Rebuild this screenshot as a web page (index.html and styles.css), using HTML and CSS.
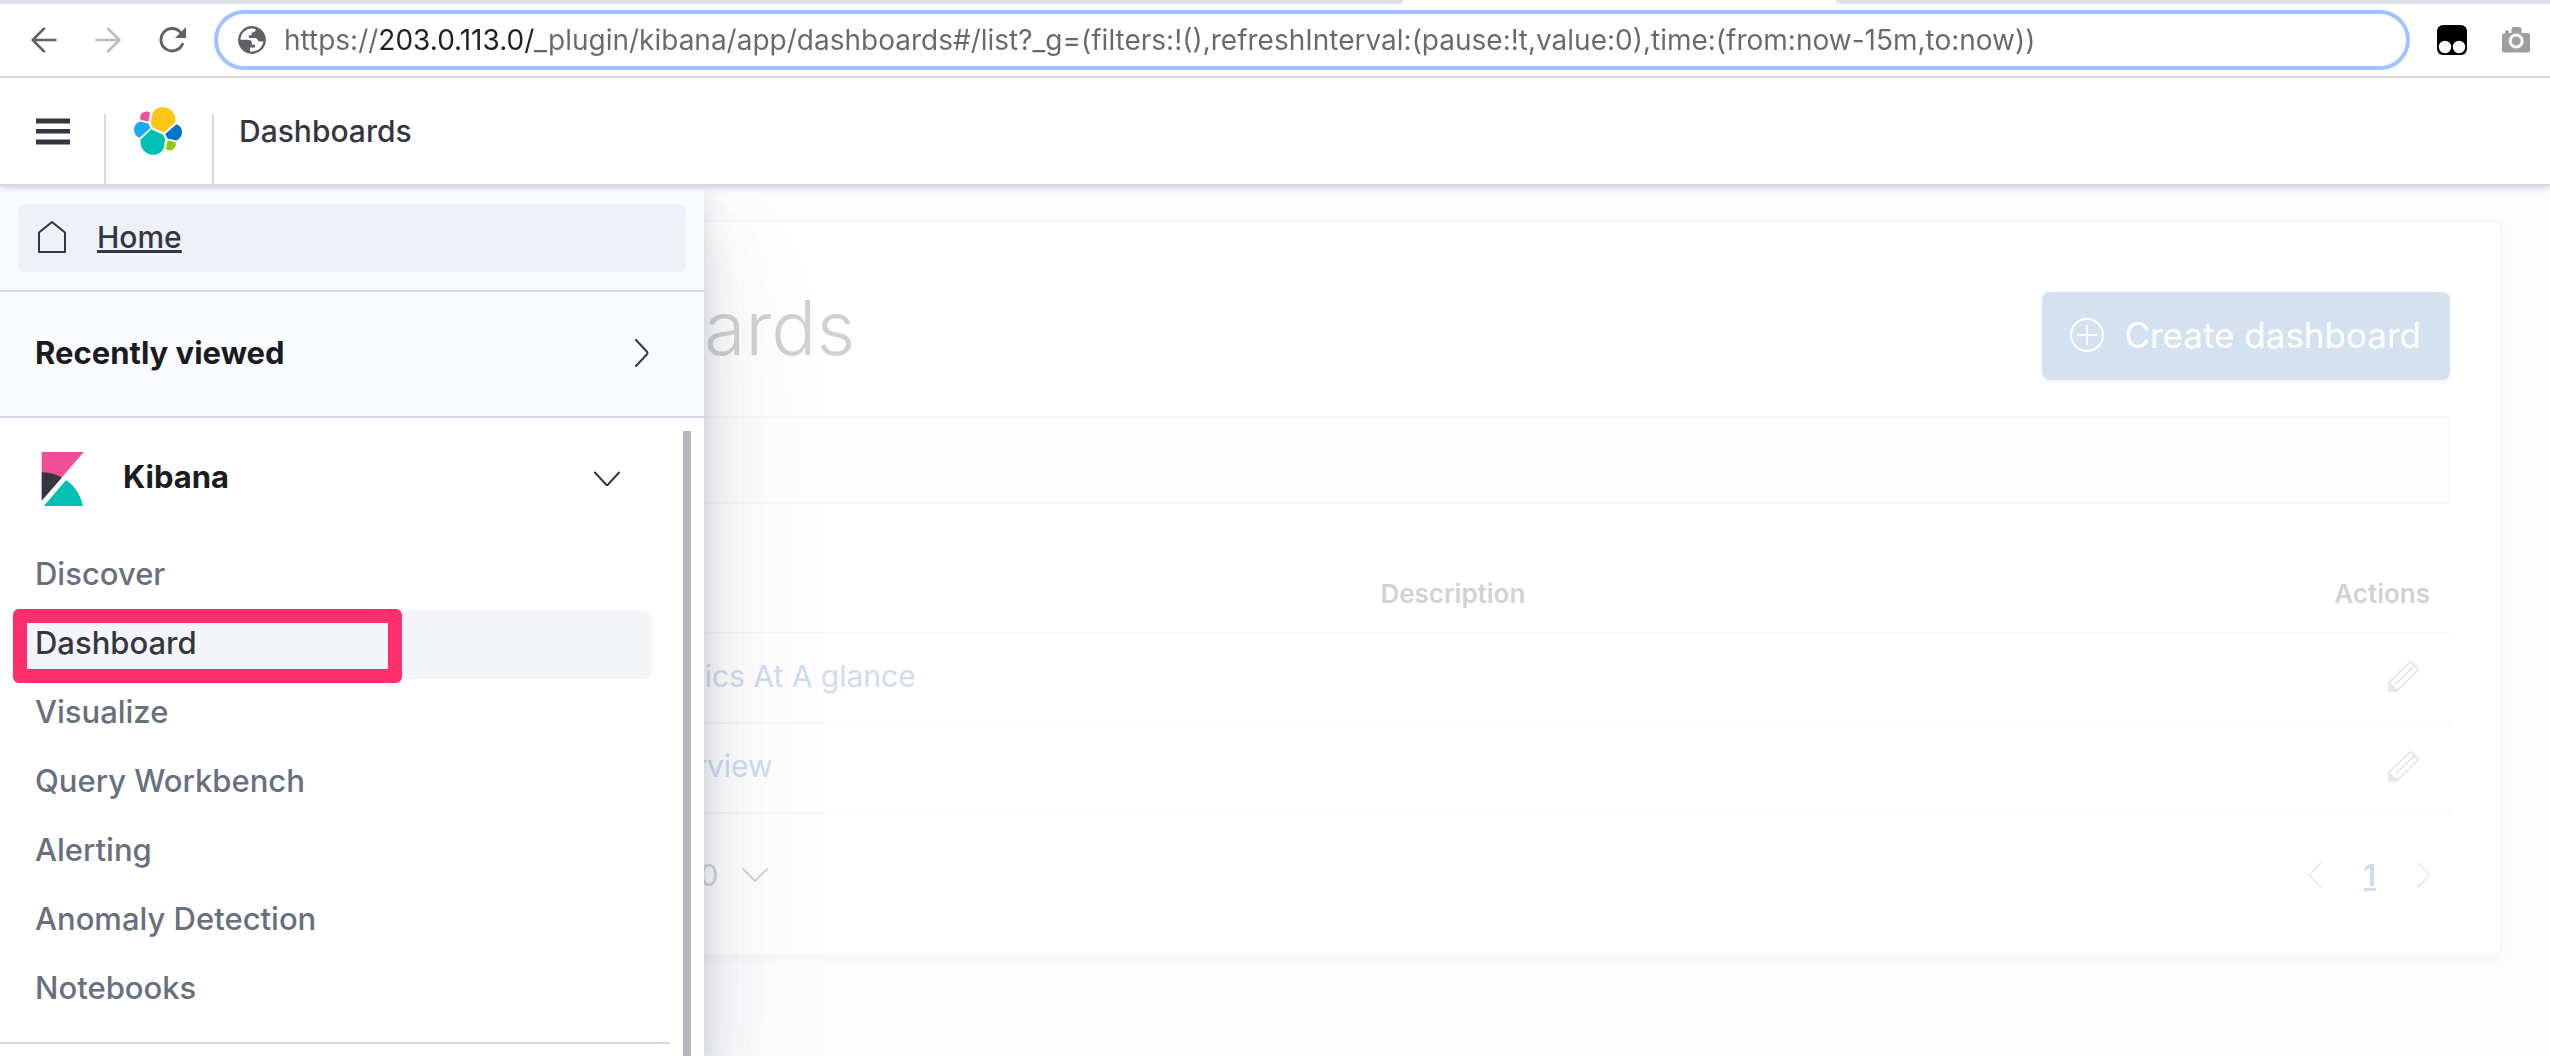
FILE: index.html
```html
<!DOCTYPE html>
<html lang="en">
<head>
<meta charset="utf-8">
<title>Dashboards</title>
<link rel="stylesheet" href="styles.css">
</head>
<body>
<div class="tabstrip"><span class="tabstrip-left"></span><span class="tabstrip-right"></span></div>
<div class="toolbar">
  <button class="icon-btn" aria-label="Back"><svg width="26" height="26" viewBox="0 0 26 26" fill="none" stroke="#5f6368" stroke-width="2.6" stroke-linecap="round" stroke-linejoin="round"><path d="M24.5 13H2M13 1.7L1.7 13L13 24.3"/></svg></button>
  <button class="icon-btn" aria-label="Forward"><svg width="26" height="26" viewBox="0 0 26 26" fill="none" stroke="#babcbe" stroke-width="2.6" stroke-linecap="round" stroke-linejoin="round"><path d="M1.5 13H24M13 1.7L24.3 13L13 24.3"/></svg></button>
  <button class="icon-btn" aria-label="Reload"><svg width="27" height="26" viewBox="0 0 27 26"><path d="M23.4 17.2A11.2 11.2 0 1 1 21.8 5.6" fill="none" stroke="#5f6368" stroke-width="2.9" stroke-linecap="round"/><path d="M27 0V11H16z" fill="#5f6368"/></svg></button>
  <label class="address">
    <svg width="28" height="28" viewBox="0 0 28 28"><circle cx="14" cy="14" r="12.7" fill="none" stroke="#5f6368" stroke-width="2.4"/><path d="M1 13.8H9.5C12.5 13.8 14 15 14 17.5V18.8H17V21.5H12V27L7 26L2 20z" fill="#5f6368"/><path d="M18 1.5L17.5 4.5C17 6 15.500 6.5 13.500 6.500V9.200H10.800V12H17.500C19.500 12 19.500 15 21.500 15.500H27L26.500 9L22 3z" fill="#5f6368"/></svg>
    <input class="address-input" type="text" aria-label="Address" value="https://203.0.113.0/_plugin/kibana/app/dashboards#/list?_g=(filters:!(),refreshInterval:(pause:!t,value:0),time:(from:now-15m,to:now))">
  </label>
  <button class="icon-btn ext-monkey" aria-label="Script manager"><svg width="30" height="30" viewBox="0 0 30 30"><rect width="30" height="30" rx="6" fill="#000"/><circle cx="8" cy="22" r="6.200" fill="#fff"/><circle cx="22" cy="22" r="6.200" fill="#fff"/></svg></button>
  <button class="icon-btn" aria-label="Screenshot"><svg width="28" height="26" viewBox="0 0 28 26"><path d="M2 6.500H3V4.500Q5 2 7 4.500V6H9.500V2Q9.500 0 11.500 0H17.500Q19.500 0 19.500 2V6H26Q28 6 28 8V23.500Q28 25.500 26 25.500H2Q0 25.500 0 23.500V8.500Q0 6.500 2 6.500z" fill="#9e9e9e"/><circle cx="14.200" cy="14" r="6" fill="none" stroke="#fff" stroke-width="3"/></svg></button>
</div>
<header class="app-header">
  <button class="icon-btn" aria-label="Toggle navigation"><svg width="34" height="27" viewBox="0 0 34 27" fill="#343741"><path d="M0 .5h34v5H0zM0 11h34v4.500H0zM0 21.500h34v5H0z"/></svg></button>
  <span class="divider"></span>
  <a class="logo" href="#" aria-label="Elastic home"><svg width="52" height="52" viewBox="0 0 32 32"><path fill="#FEC514" d="M12.580 13.787l7.002 3.211 7.066-6.213a7.849 7.849 0 00.152-1.557c0-4.287-3.464-7.775-7.720-7.775a7.700 7.700 0 00-6.360 3.363l-1.176 6.122 1.036 2.850z"/><path fill="#00BFB3" d="M5.333 21.215a7.930 7.930 0 00-.152 1.577c0 4.300 3.474 7.797 7.742 7.797a7.710 7.710 0 006.383-3.390l1.166-6.104-1.556-2.988-7.030-3.215-6.553 6.323z"/><path fill="#F04E98" d="M5.288 9.067l4.800 1.137L11.140 4.730a3.785 3.785 0 00-2.314-.790 3.833 3.833 0 00-3.813 3.840c0 .444.090.883.275 1.287z"/><path fill="#1BA9F5" d="M4.872 10.214c-2.140.710-3.609 2.770-3.609 5.035a5.314 5.314 0 003.373 4.950l6.733-6.115-1.236-2.652-5.261-1.218z"/><path fill="#93C90E" d="M20.873 27.200a3.745 3.745 0 002.297.790 3.830 3.830 0 003.813-3.830c0-.444-.090-.870-.275-1.274l-4.790-1.127-1.045 5.441z"/><path fill="#07C" d="M21.848 20.563l5.280 1.238c2.142-.710 3.609-2.770 3.609-5.040a5.306 5.306 0 00-3.390-4.936l-6.896 6.070 1.397 2.668z"/></svg></a>
  <span class="divider"></span>
  <span class="crumb">Dashboards</span>
</header>
<div class="workspace">
  <main class="page">
    <section class="panel">
      <div class="panel-head">
        <h1 class="title">Dashboards</h1>
        <button class="create"><svg width="34" height="34" viewBox="0 0 34 34" fill="none" stroke="#fff" stroke-width="2"><circle cx="17" cy="17" r="16"/><path d="M17 7V27M7 17H27"/></svg>Create dashboard</button>
      </div>
      <input class="search" type="search" aria-label="Search dashboards">
      <table class="list">
        <thead><tr><th class="col-name">Title</th><th class="col-desc">Description</th><th class="col-act">Actions</th></tr></thead>
        <tbody>
          <tr><td><a href="#">Application Metrics At A glance</a></td><td></td><td class="act"><button class="icon-btn" aria-label="Edit"><svg width="32" height="32" viewBox="0 0 32 32" fill="none" stroke="#e6e7e8" stroke-width="2" stroke-linejoin="round"><path d="M1 30.500V22.500L22.500 1.500L30.500 9.500L9 30.500zM26.500 5.500L7.500 24M18.500 5.500"/><path d="M1 23L9 30.500H1z" fill="#e6e7e8"/></svg></button></td></tr>
          <tr><td><a href="#">Application Overview</a></td><td></td><td class="act"><button class="icon-btn" aria-label="Edit"><svg width="32" height="32" viewBox="0 0 32 32" fill="none" stroke="#e6e7e8" stroke-width="2" stroke-linejoin="round"><path d="M1 30.500V22.500L22.500 1.500L30.500 9.500L9 30.500zM26.500 5.500L7.500 24M18.500 5.500"/><path d="M1 23L9 30.500H1z" fill="#e6e7e8"/></svg></button></td></tr>
        </tbody>
      </table>
      <div class="pager">
        <button class="rows">Rows per page: 10<svg width="26" height="14" viewBox="0 0 26 14" fill="none" stroke="#d4d5d7" stroke-width="2" stroke-linecap="round" stroke-linejoin="round"><path d="M1 1L13 13L25 1"/></svg></button>
        <nav class="pages" aria-label="Pages">
          <button class="icon-btn" aria-label="Previous page"><svg width="14" height="26" viewBox="0 0 14 26" fill="none" stroke="#ebecee" stroke-width="2" stroke-linecap="round" stroke-linejoin="round"><path d="M13 1L1 13L13 25"/></svg></button>
          <a class="page-no" href="#">1</a>
          <button class="icon-btn" aria-label="Next page"><svg width="14" height="26" viewBox="0 0 14 26" fill="none" stroke="#ebecee" stroke-width="2" stroke-linecap="round" stroke-linejoin="round"><path d="M1 1L13 13L1 25"/></svg></button>
        </nav>
      </div>
    </section>
  </main>
  <nav class="sidenav" aria-label="Main">
    <div class="home-wrap">
      <a class="home" href="#"><svg width="28" height="32" viewBox="0 0 28 32" fill="none" stroke="#343741" stroke-width="2" stroke-linejoin="round"><path d="M1 11.500L14 1L27 11.500V31H1z"/></svg><span>Home</span></a>
    </div>
    <button class="recent">Recently viewed<svg width="14" height="28" viewBox="0 0 14 28" fill="none" stroke="#343741" stroke-width="2" stroke-linecap="round" stroke-linejoin="round"><path d="M1 1L11.800 12.500Q13 14 11.800 15.500L1 27"/></svg></button>
    <div class="scroller">
      <section class="group">
        <button class="group-head"><svg width="54" height="54" viewBox="0 0 32 32"><path fill="#F04E98" d="M4 0v28.789L28.935.017z"/><path fill="#343741" d="M4 12v16.789l11.906-13.738A24.721 24.721 0 004 12z"/><path fill="#00BFB3" d="M18.479 16.664L6.268 30.754l-1.073 1.237h23.191c-1.252-6.292-4.883-11.719-9.908-15.327z"/></svg><span class="group-name">Kibana</span><svg width="26" height="16" viewBox="0 0 26 16" fill="none" stroke="#343741" stroke-width="2" stroke-linecap="round" stroke-linejoin="round"><path d="M1 1.500L12 13.500Q13 14.500 14 13.500L25 1.500"/></svg></button>
        <ul class="links">
          <li><a href="#">Discover</a></li>
          <li><a class="active" href="#">Dashboard<span class="marker"></span></a></li>
          <li><a href="#">Visualize</a></li>
          <li><a href="#">Query Workbench</a></li>
          <li><a href="#">Alerting</a></li>
          <li><a href="#">Anomaly Detection</a></li>
          <li><a href="#">Notebooks</a></li>
        </ul>
      </section>
      <span class="thumb"></span>
    </div>
  </nav>
</div>
</body>
</html>
```
FILE: styles.css
```css
* { box-sizing: border-box; }
body {
  margin: 0;
  min-height: 100vh;
  display: flex;
  flex-direction: column;
  background: #fff;
  color: #343741;
  font: 400 30px/40px Inter, "Liberation Sans", sans-serif;
}
a { color: inherit; text-decoration: none; }
button { margin: 0; padding: 0; border: 0; background: none; color: inherit; font: inherit; cursor: pointer; }
svg { display: block; flex: none; }
.icon-btn { display: block; flex: none; }

/* Browser chrome */
.tabstrip { display: flex; justify-content: space-between; height: 4px; }
.tabstrip-left { width: 55%; background: #dee1e6; border-bottom-right-radius: 8px; }
.tabstrip-right { width: 28%; background: #dee1e6; border-bottom-left-radius: 8px; }
.toolbar {
  display: flex;
  align-items: center;
  gap: 38px;
  padding: 6px 20px 6px 31px;
  border-bottom: 2px solid #dadce0;
}
.address {
  flex: 1;
  display: flex;
  align-items: center;
  gap: 18px;
  height: 60px;
  margin: 0 -11px 0 -10px;
  padding: 0 20px;
  border: 4px solid #a0c3ff;
  border-radius: 30px;
}
.address-input {
  flex: 1;
  min-width: 0;
  height: 40px;
  padding: 0;
  border: 0;
  outline: 0;
  font: 400 28px/40px Inter, "Liberation Sans", sans-serif;
  color: transparent;
  background: linear-gradient(90deg, #68696b 95px, #202124 95px, #202124 251px, #68696b 251px);
  background-clip: text;
  -webkit-background-clip: text;
}
.ext-monkey { margin-right: -3px; }

/* Application header */
.app-header {
  position: relative;
  z-index: 2;
  display: flex;
  align-items: center;
  height: 108px;
  padding-left: 36px;
  border-bottom: 2px solid #d3dae6;
  background: #fff;
  box-shadow: 0 2px 4px rgba(152, 162, 179, .3), 0 6px 10px -4px rgba(152, 162, 179, .2);
}
.divider { align-self: flex-end; width: 2px; height: 70px; background: #d3dae6; }
.app-header .icon-btn { margin-right: 34px; }
.logo { margin: 0 28px 0 26px; }
.crumb { margin-left: 25px; font-weight: 500; }

.workspace { position: relative; flex: 1; overflow: hidden; background: #fdfdfe; }

/* Dashboard list */
.page { padding: 34px 48px 34px 384px; }
.panel {
  padding: 70px 50px 16px;
  border: 2px solid #f8f9fa;
  border-radius: 8px;
  background: #fff;
  box-shadow: 0 4px 6px rgba(152, 162, 179, .08);
}
.panel-head { display: flex; justify-content: space-between; align-items: flex-start; margin-bottom: 36px; }
.title { margin: 0; font-size: 75px; font-weight: 300; line-height: 72px; color: #d0d1d3; }
.create {
  display: flex;
  align-items: center;
  gap: 20px;
  height: 88px;
  padding: 0 29px 2px 28px;
  border-radius: 8px;
  background: #d3e1f1;
  color: #fff;
  font-size: 35px;
  box-shadow: 0 2px 4px rgba(152, 162, 179, .12);
}
.search {
  display: block;
  width: 100%;
  height: 88px;
  border: 2px solid #f8f9fa;
  background: #fefefe;
  outline: 0;
}
.list { width: 100%; margin-top: 52px; border-collapse: separate; border-spacing: 0; table-layout: fixed; }
.list th {
  height: 78px;
  padding: 0 20px 0 18px;
  border-bottom: 2px solid #f7f8f9;
  text-align: left;
  font-size: 26px;
  font-weight: 600;
  color: #d1d2d4;
}
.list td { height: 90px; padding: 0 30px 4px 18px; border-bottom: 2px solid #f7f8f9; color: #ccddf0; }
.list td:first-child, .list th:first-child { padding-left: 35px; }
.col-name { width: 46%; }
.col-act { width: 14%; }
.list .col-act { text-align: right; }
.act .icon-btn { margin-left: auto; }
.pager { display: flex; justify-content: space-between; align-items: center; height: 124px; padding: 0 19px 2px 22px; }
.rows { display: flex; align-items: center; gap: 24px; color: #d4d5d7; }
.pages { display: flex; align-items: center; gap: 41px; }
.page-no { color: #ccddf0; font-weight: 600; text-decoration: underline; }

/* Side navigation */
.sidenav {
  position: absolute;
  top: 0;
  bottom: 0;
  left: 0;
  display: flex;
  flex-direction: column;
  width: 704px;
  overflow: visible;
  background: #fff;
  box-shadow: 0 80px 128px rgba(65, 78, 101, .1), 0 40px 64px rgba(65, 78, 101, .1), 0 20px 32px rgba(65, 78, 101, .1), 0 4px 16px rgba(65, 78, 101, .1);
}
.home-wrap { padding: 18px; border-bottom: 2px solid #d3dae6; background: #fafbfd; }
.home {
  display: flex;
  align-items: center;
  gap: 31px;
  height: 68px;
  padding: 0 0 2px 20px;
  border-radius: 8px;
  background: #eef1f7;
  font-weight: 500;
  text-decoration: underline;
}
.recent {
  display: flex;
  justify-content: space-between;
  align-items: center;
  height: 126px;
  padding: 0 55px 2px 35px;
  border-bottom: 2px solid #d3dae6;
  background: #fafbfd;
  color: #1a1c21;
  font-size: 31px;
  font-weight: 700;
}
.scroller { flex: 1; display: flex; align-items: flex-start; justify-content: space-between; padding-right: 13px; }
.group { width: 670px; padding-bottom: 18px; border-bottom: 2px solid #d3dae6; }
.group-head {
  display: flex;
  align-items: center;
  gap: 34px;
  width: 100%;
  height: 123px;
  padding: 0 50px 2px 35px;
  color: #1a1c21;
  font-size: 31px;
  font-weight: 700;
}
.group-name { flex: 1; padding-bottom: 3px; text-align: left; }
.links { margin: 0; padding: 0 18px; list-style: none; }
.links a {
  position: relative;
  display: block;
  height: 69px;
  padding: 13px 17px;
  border-radius: 8px;
  color: #69707d;
  font-size: 31px;
  font-weight: 500;
}
.links .active { background: #f4f5f8; color: #343741; }
.marker {
  position: absolute;
  top: -1px;
  left: -5px;
  width: 389px;
  height: 74px;
  border: 14px solid #ff2e6c;
  border-radius: 6px;
}
.thumb { align-self: stretch; width: 8px; margin-top: 13px; background: #b1b7c0; }
```
